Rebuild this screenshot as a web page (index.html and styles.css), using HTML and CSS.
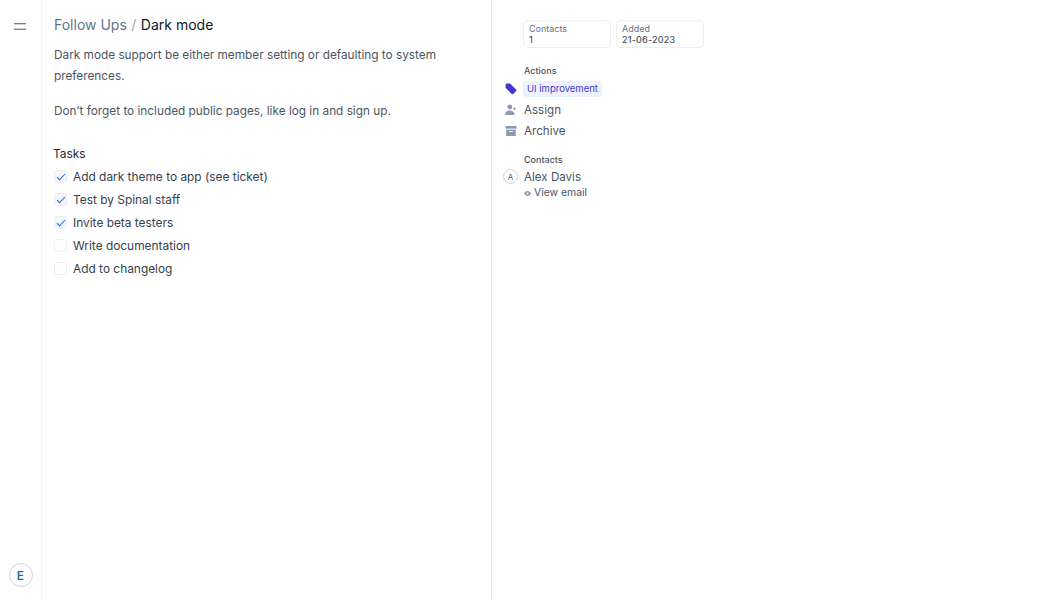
FILE: index.html
```html
<!DOCTYPE html>
<html lang="en">
  <head>
    <meta charset="UTF-8" />
    <title>Dark mode</title>
    <link rel="stylesheet" href="styles.css">
  </head>
  <body>
    <div class="app">
      <aside class="rail">
        <button class="menu-btn" aria-label="Menu">
          <svg width="12" height="7" viewBox="0 0 12 7"><path d="M0 .75h12M0 6.25h12" stroke="#4b5563" stroke-width="1.2" fill="none"/></svg>
        </button>
        <div class="avatar-e">E</div>
      </aside>

      <main class="main">
        <h1 class="crumbs">
          <span class="crumb-parent">Follow Ups</span>
          <span class="crumb-sep">/</span>
          <span class="crumb-current">Dark mode</span>
        </h1>
        <p class="body-text">Dark mode support be either member setting or defaulting to system preferences.</p>
        <p class="body-text">Don’t forget to included public pages, like log in and sign up.</p>

        <h2 class="tasks-title">Tasks</h2>
        <ul class="tasks">
          <li class="task">
            <span class="check checked"><svg width="10" height="8" viewBox="0 0 10 8"><path d="M1 4.2l2.6 2.6L9 1" stroke="#2563eb" stroke-width="1.1" fill="none"/></svg></span>
            Add dark theme to app (see ticket)
          </li>
          <li class="task">
            <span class="check checked"><svg width="10" height="8" viewBox="0 0 10 8"><path d="M1 4.2l2.6 2.6L9 1" stroke="#2563eb" stroke-width="1.1" fill="none"/></svg></span>
            Test by Spinal staff
          </li>
          <li class="task">
            <span class="check checked"><svg width="10" height="8" viewBox="0 0 10 8"><path d="M1 4.2l2.6 2.6L9 1" stroke="#2563eb" stroke-width="1.1" fill="none"/></svg></span>
            Invite beta testers
          </li>
          <li class="task"><span class="check"></span>Write documentation</li>
          <li class="task"><span class="check"></span>Add to changelog</li>
        </ul>
      </main>

      <section class="side">
        <div class="stats">
          <div class="stat">
            <div class="stat-label">Contacts</div>
            <div class="stat-value">1</div>
          </div>
          <div class="stat">
            <div class="stat-label">Added</div>
            <div class="stat-value">21-06-2023</div>
          </div>
        </div>

        <h3 class="side-title">Actions</h3>
        <div class="action action-tag">
          <svg class="action-icon" width="12" height="12" viewBox="0 0 12 12"><path d="M.6 1.6A1 1 0 0 1 1.6.6h3.2c.3 0 .5.1.7.3l5.6 5.6a1 1 0 0 1 0 1.4l-3 3a1 1 0 0 1-1.4 0L1 5.3a1 1 0 0 1-.4-.7z" fill="#4338ca"/></svg>
          <span class="tag">UI improvement</span>
        </div>
        <div class="action">
          <svg class="action-icon" width="12" height="12" viewBox="0 0 12 12"><circle cx="4.8" cy="3" r="2.4" fill="#8d99ae"/><path d="M0 11c0-2.8 2-4.4 4.8-4.4S9.600 8.200 9.600 11z" fill="#8d99ae"/><path d="M9.500 3.200v3M8 4.700h3" stroke="#8d99ae" stroke-width=".9"/></svg>
          <span class="action-text">Assign</span>
        </div>
        <div class="action">
          <svg class="action-icon" width="12" height="12" viewBox="0 0 12 12"><rect x=".5" y="1" width="11" height="2.600" fill="#8d99ae"/><path d="M1.200 4.600h9.600V11H1.200z" fill="#8d99ae"/><path d="M4.300 6.500h3.400" stroke="#fff" stroke-width="1"/></svg>
          <span class="action-text">Archive</span>
        </div>

        <h3 class="side-title contacts-title">Contacts</h3>
        <div class="contact">
          <div class="avatar-a">A</div>
          <span class="action-text">Alex Davis</span>
        </div>
        <div class="view-email">
          <svg width="7" height="5" viewBox="0 0 7 5"><path d="M0 2.500C1 .8 2.200 0 3.500 0S6 .8 7 2.500C6 4.200 4.800 5 3.500 5S1 4.200 0 2.500z" fill="#8d99ae"/><circle cx="3.500" cy="2.500" r="1.100" fill="#fff"/></svg>
          View email
        </div>
      </section>
    </div>
  </body>
</html>
```

FILE: styles.css
```css
* {
  box-sizing: border-box;
}
body {
  margin: 0;
  font-family: Inter, "Liberation Sans", sans-serif;
  background: white;
  color: #374151;
}
.app {
  display: flex;
  height: 600px;
  overflow: hidden;
}
.rail {
  width: 42px;
  flex: none;
  border-right: 1px solid #f3f4f6;
  display: flex;
  flex-direction: column;
  align-items: center;
  justify-content: space-between;
  padding: 23px 0 13px;
}
.menu-btn {
  display: flex;
  padding: 0;
  border: none;
  background: none;
  margin-left: -1px;
}
.avatar-e {
  width: 24px;
  height: 24px;
  border: 1px solid #d1d5db;
  border-radius: 50%;
  display: flex;
  align-items: center;
  justify-content: center;
  font-size: 12px;
  font-weight: 600;
  color: #1d7296;
}
.main {
  width: 450px;
  flex: none;
  border-right: 1px solid #e5e7eb;
  padding: 15px 40px 0 11px;
}
.crumbs {
  margin: 0 0 10px 1px;
  display: flex;
  gap: 4.5px;
  font-size: 14px;
  font-weight: 400;
  line-height: 20px;
}
.crumb-parent {
  color: #64748b;
}
.crumb-sep {
  color: #9ca3af;
}
.crumb-current {
  color: #111827;
}
.body-text {
  margin: 0 0 14px 1px;
  font-size: 11.8px;
  line-height: 21px;
  color: #4b5563;
}
.tasks-title {
  margin: 21px 0 0;
  font-size: 11.9px;
  font-weight: 400;
  line-height: 22px;
  color: #1f2937;
}
.tasks {
  list-style: none;
  margin: 0;
  padding: 0;
}
.task {
  display: flex;
  align-items: center;
  gap: 6px;
  height: 23px;
  margin-left: 1px;
  font-size: 11.9px;
  color: #374151;
}
.check {
  width: 13px;
  height: 13px;
  border: 1px solid #eceef1;
  border-radius: 3px;
  display: flex;
  align-items: center;
  justify-content: center;
}
.check.checked {
  background: #f5f7ff;
}
.side {
  flex: 1;
  padding: 20px 0 0 11px;
  color: #4b5563;
}
.stats {
  display: flex;
  gap: 5px;
  margin-left: 20px;
}
.stat {
  width: 88px;
  height: 28px;
  border: 1px solid #eceef1;
  border-radius: 5px;
  padding: 2px 5px;
}
.stat-label {
  font-size: 9px;
  line-height: 11px;
  color: #6b7280;
}
.stat-value {
  font-size: 9px;
  line-height: 12px;
  font-weight: 500;
  letter-spacing: 0.2px;
  color: #4b5563;
}
.side-title {
  margin: 17px 0 3px 21px;
  font-size: 9px;
  line-height: 12px;
  font-weight: 500;
  color: #4b5563;
}
.contacts-title {
  margin-top: 13px;
  margin-bottom: 2px;
}
.action {
  display: flex;
  align-items: center;
  height: 21px;
}
.action-tag {
  height: 17px;
  margin-bottom: 2px;
}
.action-icon {
  flex: none;
  margin-left: 2px;
  margin-right: 6px;
}
.tag {
  background: #eef2ff;
  color: #4338ca;
  font-size: 9.5px;
  line-height: 16px;
  padding: 0 4px;
  border-radius: 2px;
}
.action-text {
  font-size: 11.6px;
  margin-left: 1px;
  color: #4b5563;
}
.contact {
  display: flex;
  align-items: center;
  gap: 5px;
  height: 17px;
}
.avatar-a {
  width: 15px;
  height: 15px;
  border: 1px solid #d1d5db;
  border-radius: 50%;
  display: flex;
  align-items: center;
  justify-content: center;
  font-size: 8px;
  color: #4b5563;
}
.view-email {
  display: flex;
  align-items: center;
  gap: 3px;
  margin: 1px 0 0 21px;
  font-size: 10.4px;
  line-height: 14px;
  color: #4b5563;
}
```
